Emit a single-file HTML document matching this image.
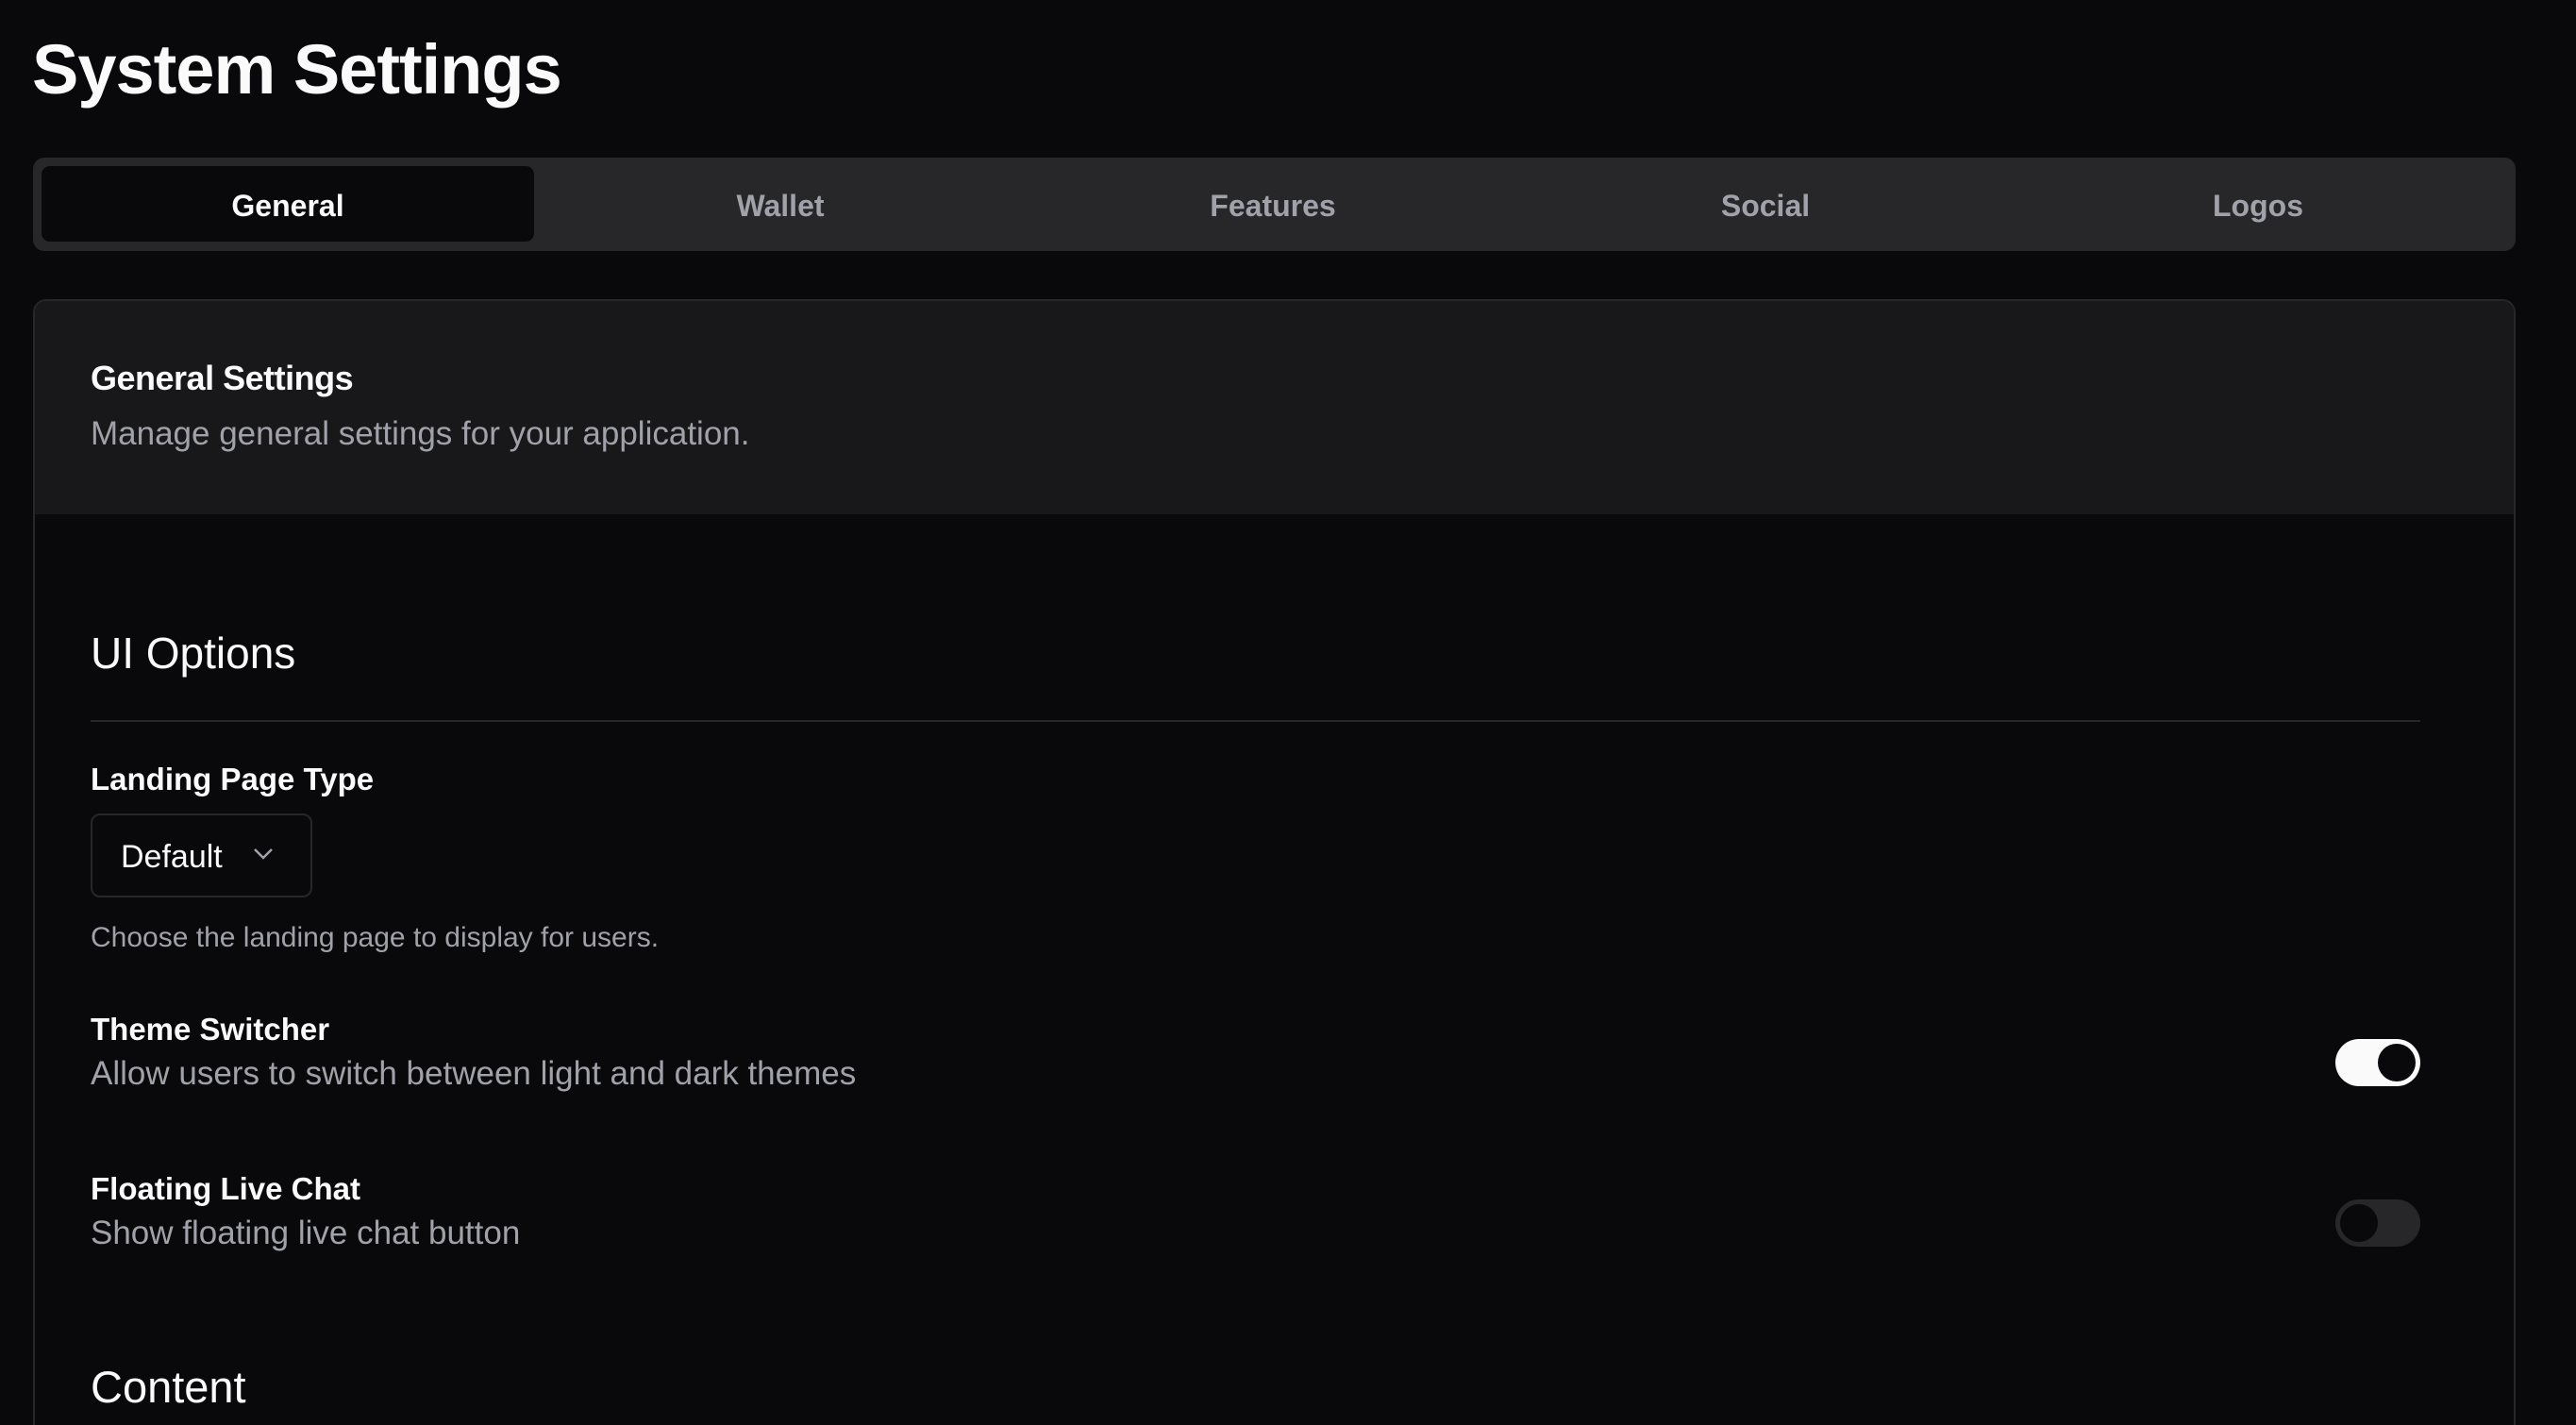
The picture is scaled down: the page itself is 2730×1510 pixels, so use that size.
<!DOCTYPE html>
<html style="width:2730px;height:1510px;overflow:hidden"><head><meta charset="utf-8"><style>
*{margin:0;padding:0;box-sizing:border-box}
body{width:2730px;height:1510px;background:#09090b;font-family:"Liberation Sans",sans-serif;color:#fafafa;overflow:hidden;position:relative}
.a{position:absolute;white-space:nowrap;line-height:1}
.muted{color:#a1a1aa}
</style></head><body>
<div class="a" style="left:34px;top:37px;font-size:74px;font-weight:bold;letter-spacing:-1px">System Settings</div>
<div class="a" style="left:35px;top:167px;width:2631px;height:99px;background:#27272a;border-radius:12px"></div>
<div class="a" style="left:44px;top:176px;width:522px;height:80px;background:#09090b;border-radius:9px"></div>
<div class="a" style="left:44px;top:202px;width:522px;text-align:center;font-size:32px;font-weight:bold">General</div>
<div class="a muted" style="left:566px;top:202px;width:522px;text-align:center;font-size:32px;font-weight:bold">Wallet</div>
<div class="a muted" style="left:1088px;top:202px;width:522px;text-align:center;font-size:32px;font-weight:bold">Features</div>
<div class="a muted" style="left:1610px;top:202px;width:522px;text-align:center;font-size:32px;font-weight:bold">Social</div>
<div class="a muted" style="left:2132px;top:202px;width:522px;text-align:center;font-size:32px;font-weight:bold">Logos</div>
<div class="a" style="left:35px;top:317px;width:2631px;height:1230px;border:2px solid #27272a;border-radius:14px;overflow:hidden">
<div style="height:226px;background:#18181b"></div>
</div>
<div class="a" style="left:96px;top:383px;font-size:36px;font-weight:bold;letter-spacing:-0.5px">General Settings</div>
<div class="a muted" style="left:96px;top:442px;font-size:35px">Manage general settings for your application.</div>
<div class="a" style="left:96px;top:669px;font-size:46px">UI Options</div>
<div class="a" style="left:96px;top:763px;width:2469px;height:2px;background:#27272a"></div>
<div class="a" style="left:96px;top:809px;font-size:33px;font-weight:bold">Landing Page Type</div>
<div class="a" style="left:96px;top:862px;width:235px;height:89px;border:2px solid #27272a;border-radius:10px"></div>
<div class="a" style="left:128px;top:891px;font-size:34px">Default</div>
<svg class="a" style="left:268px;top:898px" width="22" height="14" viewBox="0 0 22 14"><path d="M2 2l9 9 9-9" fill="none" stroke="#a1a1aa" stroke-width="2.5"/></svg>
<div class="a muted" style="left:96px;top:979px;font-size:30px">Choose the landing page to display for users.</div>
<div class="a" style="left:96px;top:1074px;font-size:33px;font-weight:bold">Theme Switcher</div>
<div class="a muted" style="left:96px;top:1120px;font-size:35px">Allow users to switch between light and dark themes</div>
<div class="a" style="left:2475px;top:1101px;width:90px;height:50px;background:#fafafa;border-radius:25px"></div>
<div class="a" style="left:2520px;top:1106px;width:40px;height:40px;background:#09090b;border-radius:50%"></div>
<div class="a" style="left:96px;top:1243px;font-size:33px;font-weight:bold">Floating Live Chat</div>
<div class="a muted" style="left:96px;top:1289px;font-size:35px">Show floating live chat button</div>
<div class="a" style="left:2475px;top:1271px;width:90px;height:50px;background:#27272a;border-radius:25px"></div>
<div class="a" style="left:2480px;top:1276px;width:40px;height:40px;background:#09090b;border-radius:50%"></div>
<div class="a" style="left:96px;top:1446px;font-size:47px">Content</div>
</body></html>
